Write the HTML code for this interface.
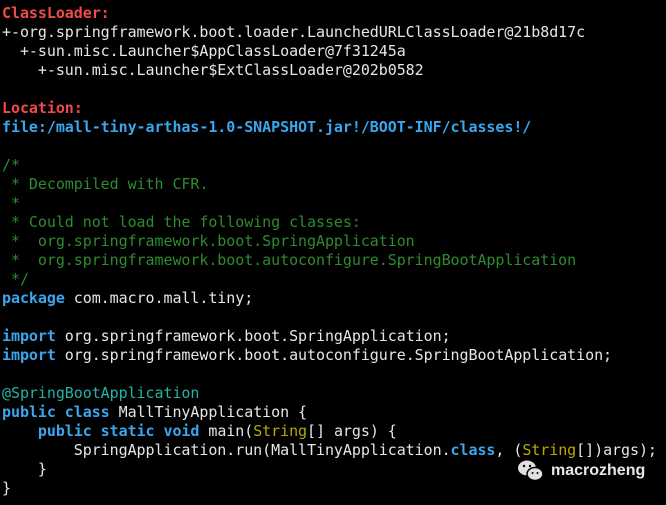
<!DOCTYPE html>
<html><head><meta charset="utf-8"><style>
html,body{margin:0;padding:0;background:#000;width:666px;height:505px;overflow:hidden}
pre{margin:0;padding:4px 0 0 2px;font-family:"DejaVu Sans Mono","Liberation Mono",monospace;font-size:15px;letter-spacing:-0.06px;line-height:19px;color:#e6e6e6;white-space:pre}
.r{color:#f04a4a;font-weight:bold}
.f{color:#3aa6ee;font-weight:bold}
.k{color:#3aa6ee;font-weight:bold}
.c{color:#2e8b2e}
.a{color:#20b5a5}
.s{color:#bba900}
.wm{position:absolute;left:517px;top:459px;display:flex;align-items:center;color:#e8e8e8;font-family:"Liberation Sans",sans-serif;font-size:16px;font-weight:bold}
</style></head><body>
<pre><span class="r">ClassLoader:</span>
+-org.springframework.boot.loader.LaunchedURLClassLoader@21b8d17c
  +-sun.misc.Launcher$AppClassLoader@7f31245a
    +-sun.misc.Launcher$ExtClassLoader@202b0582

<span class="r">Location:</span>
<span class="f">file:/mall-tiny-arthas-1.0-SNAPSHOT.jar!/BOOT-INF/classes!/</span>

<span class="c">/*
 * Decompiled with CFR.
 *
 * Could not load the following classes:
 *  org.springframework.boot.SpringApplication
 *  org.springframework.boot.autoconfigure.SpringBootApplication
 */</span>
<span class="k">package</span> com.macro.mall.tiny;

<span class="k">import</span> org.springframework.boot.SpringApplication;
<span class="k">import</span> org.springframework.boot.autoconfigure.SpringBootApplication;

<span class="a">@SpringBootApplication</span>
<span class="k">public class</span> MallTinyApplication {
    <span class="k">public static void</span> main(<span class="s">String</span>[] args) {
        SpringApplication.run(MallTinyApplication.<span class="k">class</span>, (<span class="s">String</span>[])args);
    }
}</pre>
<div class="wm"><svg width="28" height="24" viewBox="0 0 28 24"><ellipse cx="10" cy="9" rx="9" ry="7.5" fill="#e0e0e0"/><ellipse cx="18" cy="15" rx="8" ry="6.5" fill="#e0e0e0" stroke="#000" stroke-width="1.5"/><circle cx="7" cy="7" r="1.2" fill="#000"/><circle cx="13" cy="7" r="1.2" fill="#000"/><circle cx="15.5" cy="14" r="1" fill="#000"/><circle cx="20.5" cy="14" r="1" fill="#000"/></svg><span style="margin-left:6px">macrozheng</span></div>
</body></html>
